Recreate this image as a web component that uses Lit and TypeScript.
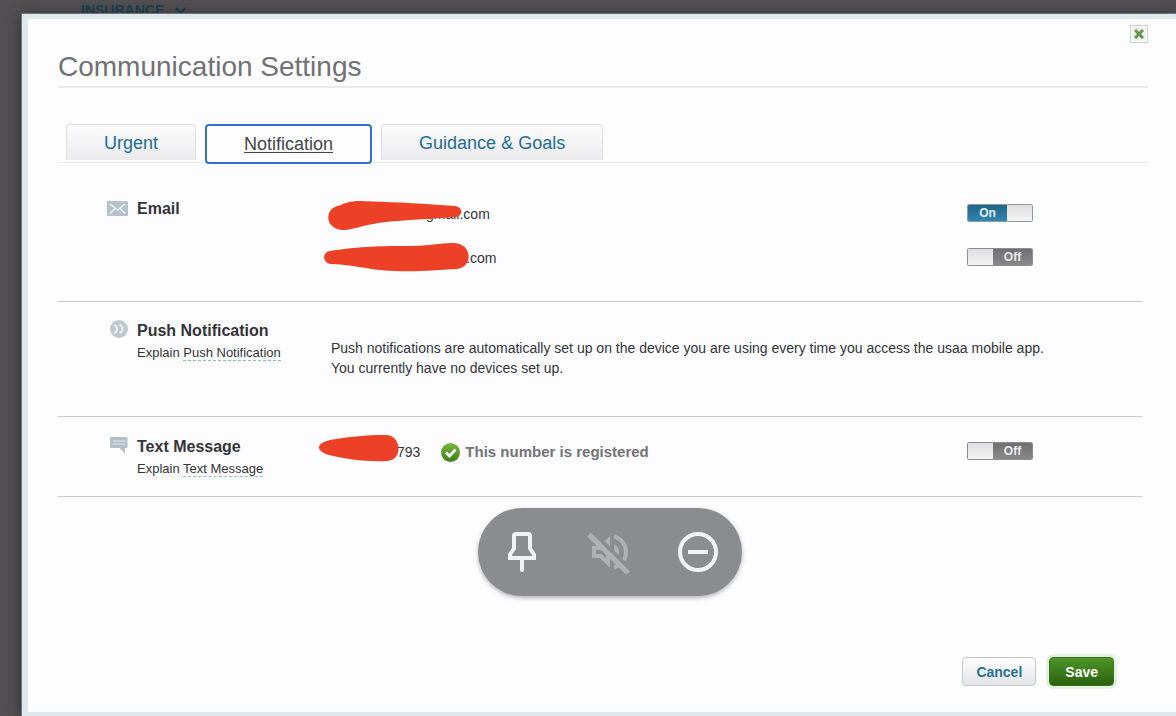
import { LitElement, html, css, svg } from "lit";
import { customElement, property, state } from "lit/decorators.js";

@customElement("toggle-switch")
class ToggleSwitch extends LitElement {
  @property({ type: Boolean }) on = false;
  @property() name = "";

  static styles = css`
    :host { display: block; width: 66px; height: 18px; }
    .switch {
      position: relative; display: grid; grid-template-columns: 25px 1fr; height: 18px;
      box-sizing: border-box; border: 1px solid #8d8d8f; border-radius: 2px; overflow: hidden;
      font: bold 12px/17px "Liberation Sans", Arial, sans-serif; color: #e8ecee; cursor: pointer;
    }
    .switch.on { grid-template-columns: 1fr 25px; border-color: #8f9a9f; }
    .box { position: absolute; inset: 0; margin: 0; opacity: 0; cursor: pointer; }
    .knob { background: linear-gradient(#dededf, #f5f5f5); }
    .text { background: linear-gradient(#707070, #8a8a8a); text-align: center; }
    .on .text { background: linear-gradient(#1f6688, #3288b0); order: -1; }
  `;

  render() {
    return html`<label class="switch ${this.on ? "on" : ""}">
      <input class="box" type="checkbox" aria-label=${this.name} .checked=${this.on}
        @change=${(e: Event) => (this.on = (e.target as HTMLInputElement).checked)} />
      <span class="knob"></span><span class="text">${this.on ? "On" : "Off"}</span>
    </label>`;
  }
}

const mailIcon = svg`<svg width="21" height="15" viewBox="0 0 21 15"><rect width="21" height="15" rx="1" fill="#b5c3c9"/><path d="M3 3l7.500 6L18 3M3 12.500l5-5M18 12.500l-5-5" fill="none" stroke="#eef4f6" stroke-width="1.500"/></svg>`;
const pushIcon = svg`<svg width="18" height="18" viewBox="0 0 18 18"><circle cx="9" cy="9" r="9" fill="#bdc8cd"/><path d="M4 5c4 1 4 7 0 8M9.500 5c4 1 4 7 0 8" fill="none" stroke="#eaf0f2" stroke-width="2"/></svg>`;
const textIcon = svg`<svg width="18" height="17" viewBox="0 0 18 17"><path d="M1 0h15.500a1 1 0 0 1 1 1v9a1 1 0 0 1-1 1H15v5.500L9.500 11H1a1 1 0 0 1-1-1V1a1 1 0 0 1 1-1z" fill="#b3c1c7"/><path d="M3 4h12M3 7h12" stroke="#dbe4e8" stroke-width="1"/></svg>`;

@customElement("app-root")
class AppRoot extends LitElement {
  @state() tab = "Notification";

  static styles = css`
    :host { display: block; font: 14px/20px "Liberation Sans", Arial, sans-serif; color: #333437; }
    .page { display: flex; flex-direction: column; min-height: 100vh; background: #525052; overflow: hidden; }
    .nav {
      height: 14px; padding-left: 81px; overflow: hidden;
      color: #173f50; font-weight: bold; display: flex; gap: 11px; align-items: flex-start;
    }
    .nav svg { margin-top: 7px; }
    .dialog {
      position: relative; flex: 1; display: flex; flex-direction: column; margin-left: 22px;
      box-sizing: border-box; border: solid #dfe8ec; border-width: 5px 0 4px 6px; background: #fdfdff;
      box-shadow: 0 0 0 1px #6f777b, 0 2px 14px #2b2b2f; padding: 0 28px 26px 30px;
    }
    svg { display: block; }
    .close {
      position: absolute; top: 6px; right: 28px; width: 18px; height: 18px; padding: 3px;
      border: 1px solid #c9cdce; background: #f0f2f0; box-shadow: inset 0 0 0 1px #fff;
    }
    .title { margin: 0; padding: 29px 0 0; font-size: 28px; line-height: 38px; font-weight: normal; color: #707174; border-bottom: 2px solid #e6ecee; }
    .tabs { display: flex; gap: 9px; align-items: flex-end; margin-top: 36px; padding: 0 8px; border-bottom: 1px solid #e6e8ea; }
    .tab {
      height: 36px; margin-bottom: 2px; padding: 0 37px; border: 1px solid #dddfe0; border-bottom: 0; border-radius: 4px 4px 0 0;
      background: linear-gradient(#fbfbfc, #ebebed); color: #1f6d92; font: 18px/34px "Liberation Sans", Arial, sans-serif;
    }
    .tab.active {
      height: 40px; margin-bottom: -2px; border: 2px solid #2f74c4; border-radius: 4px; background: #fefeff;
      color: #444548; text-decoration: underline; text-underline-offset: 2px;
    }
    .row {
      display: grid; grid-template-columns: 79px 194px 1fr 175px; margin-right: 6px;
      border-bottom: 1px solid #c6c9cb; row-gap: 24px;
    }
    .email { padding: 41px 0 33px; }
    .push { padding: 19px 0 38px; }
    .sms { padding: 20px 0 17px; }
    .icon { display: flex; justify-content: flex-end; align-items: flex-start; padding-right: 9px; }
    .email .icon { margin-top: -3px; }
    .push .icon { margin-top: -1px; }
    .name { margin: 0; font-size: 16px; line-height: 20px; font-weight: bold; }
    .email .name { margin-top: -5px; }
    .explain { margin: 2px 0 0; font-size: 13px; line-height: 20px; }
    .term { color: inherit; text-decoration: none; border-bottom: 1px dashed #8fc0b4; }
    .value { position: relative; display: flex; align-items: center; height: 20px; }
    .first { padding-left: 95px; }
    .second { grid-column: 3; padding-left: 135px; }
    .phone { padding-left: 66px; margin-top: 5px; gap: 21px; }
    .sms toggle-switch { margin-top: 5px; }
    .note { grid-column: 3 / 5; margin: 17px 0 0; }
    .ok { display: flex; align-items: center; gap: 5px; font-size: 15px; font-weight: bold; color: #727376; }
    .mark { position: absolute; top: -15px; left: -15px; pointer-events: none; }
    .actions { display: flex; justify-content: flex-end; gap: 13px; margin-top: auto; padding: 24px 34px 0 0; }
    .btn { height: 29px; padding: 0 13px; border: 1px solid #c5c8ca; border-radius: 4px; background: linear-gradient(#fefefe, #e3e4e6); color: #266f93; font: bold 14px/26px "Liberation Sans", Arial, sans-serif; }
    .save { padding: 0 15px; border-color: #397420; background: linear-gradient(#4e9629, #2c610e); color: #fff; box-shadow: 0 0 0 3px #e3f2df; }
    .float {
      position: absolute; bottom: 116px; left: calc(50% + 8px); transform: translateX(-50%); display: flex; gap: 40px;
      padding: 20px; border-radius: 44px; background: #8b8c8f; box-shadow: 0 2px 4px #77777a88;
    }
    .tool { width: 48px; height: 48px; padding: 0; border: 0; background: none; color: #f0f2f6; }
    .muted { color: #aeb0b2; }
  `;

  render() {
    return html`<div class="page">
      <div class="nav"><span>INSURANCE</span>
        <svg width="11" height="8" viewBox="0 0 11 8"><path d="M1 1l4.500 5L10 1" fill="none" stroke="#173f50" stroke-width="2.500"/></svg></div>
      <main class="dialog">
        <button class="close" aria-label="Close"><svg width="10" height="10" viewBox="0 0 10 10"><path d="M1 1l8 8M9 1L1 9" stroke="#669646" stroke-width="3"/></svg></button>
        <h1 class="title">Communication Settings</h1>
        <div class="tabs" role="tablist">
          ${["Urgent", "Notification", "Guidance & Goals"].map((t) => html`<button role="tab"
            class="tab ${t === this.tab ? "active" : ""}" aria-selected=${t === this.tab}
            @click=${() => (this.tab = t)}>${t}</button>`)}
        </div>
        <section class="row email">
          <div class="icon">${mailIcon}</div>
          <h2 class="name">Email</h2>
          <div class="value first">gmail.com
            <svg class="mark" width="170" height="50" viewBox="0 0 170 50"><path d="M25 16C36 11 42 12 56 12.500C80 13 110 15 139 17C147 18 148 27 139 28C115 30 88 31 70 33C47 36 42 39 35 40C23 44 9 37 13 24Q15 18 25 16z" fill="#ec4126"/></svg>
          </div>
          <toggle-switch name="First email" on></toggle-switch>
          <div class="value second">.com
            <svg class="mark" width="170" height="50" viewBox="0 0 170 50"><path d="M14 18C40 14 58 13 92 13C116 13 121 10 138 10C157 11 157 34 141 36C118 37 105 39 78 38C52 37 41 32 15 31C6 30 6 19 14 18z" fill="#ec4126"/></svg>
          </div>
          <toggle-switch name="Second email"></toggle-switch>
        </section>
        <section class="row push">
          <div class="icon">${pushIcon}</div>
          <div><h2 class="name">Push Notification</h2>
            <p class="explain">Explain <a class="term" href="#push">Push Notification</a></p></div>
          <p class="note">Push notifications are automatically set up on the device you are using every time you access the usaa mobile app.<br />You currently have no devices set up.</p>
        </section>
        <section class="row sms">
          <div class="icon">${textIcon}</div>
          <div><h2 class="name">Text Message</h2>
            <p class="explain">Explain <a class="term" href="#text">Text Message</a></p></div>
          <div class="value phone"><span>793</span>
            <span class="ok"><svg width="19" height="19" viewBox="0 0 19 19"><defs><linearGradient id="g" x2="0" y2="1"><stop stop-color="#79b83c"/><stop offset="1" stop-color="#3f7d1a"/></linearGradient></defs><circle cx="9.500" cy="9.500" r="9.500" fill="url(#g)"/><path d="M5 9.500l3.500 3.500 6-6.500" fill="none" stroke="#fff" stroke-width="2.600"/></svg>This number is registered</span>
            <svg class="mark" width="100" height="50" viewBox="0 0 100 50"><path d="M14 13C30 10 50 8 70 8C85 8 88 33 71 34C50 35 30 32 13 28C-1 24 0 16 14 13z" fill="#ec4126"/></svg>
          </div>
          <toggle-switch name="Text message"></toggle-switch>
        </section>
        <div class="actions"><button class="btn">Cancel</button><button class="btn save">Save</button></div>
        <div class="float">
          <button class="tool" aria-label="Pin"><svg width="48" height="48" viewBox="0 0 48 48" fill="none" stroke="currentColor" stroke-width="4"><path d="M18 6h12a2 2 0 0 1 2 2v12.500l4 6V30H12v-3.500l4-6V8a2 2 0 0 1 2-2z"/><path d="M24 30v12" stroke-linecap="round"/></svg></button>
          <button class="tool muted" aria-label="Unmute"><svg width="48" height="48" viewBox="0 0 24 24" fill="currentColor"><path d="m19.800 22.600-3.025-3.025q-.625.4-1.325.687-.7.288-1.450.463v-2.050q.35-.125.688-.25.337-.125.637-.3L12 14.800V20l-5-5H3V9h3.200L1.400 4.200l1.400-1.400 18.400 18.400Zm-.2-5.800-1.450-1.450q.425-.775.638-1.625.212-.85.212-1.750 0-2.350-1.375-4.200T14 5.275v-2.050q3.100.7 5.050 3.137Q21 8.800 21 11.975q0 1.325-.362 2.550-.363 1.225-1.038 2.275Zm-3.350-3.350L14 11.200V7.950q1.175.55 1.838 1.650.662 1.100.662 2.400 0 .375-.062.738-.063.362-.188.712ZM12 9.200 9.400 6.600 12 4Zm-2 5.950V12.800L8.200 11H5v2h2.850Z"/><path d="M1.500 3.300L21 22.500" stroke="currentColor" stroke-width="2.600"/></svg></button>
          <button class="tool" aria-label="Remove"><svg width="48" height="48" viewBox="0 0 48 48" fill="none" stroke="currentColor" stroke-width="4"><circle cx="24" cy="24" r="18"/><path d="M14 24h20"/></svg></button>
        </div>
      </main>
    </div>`;
  }
}
